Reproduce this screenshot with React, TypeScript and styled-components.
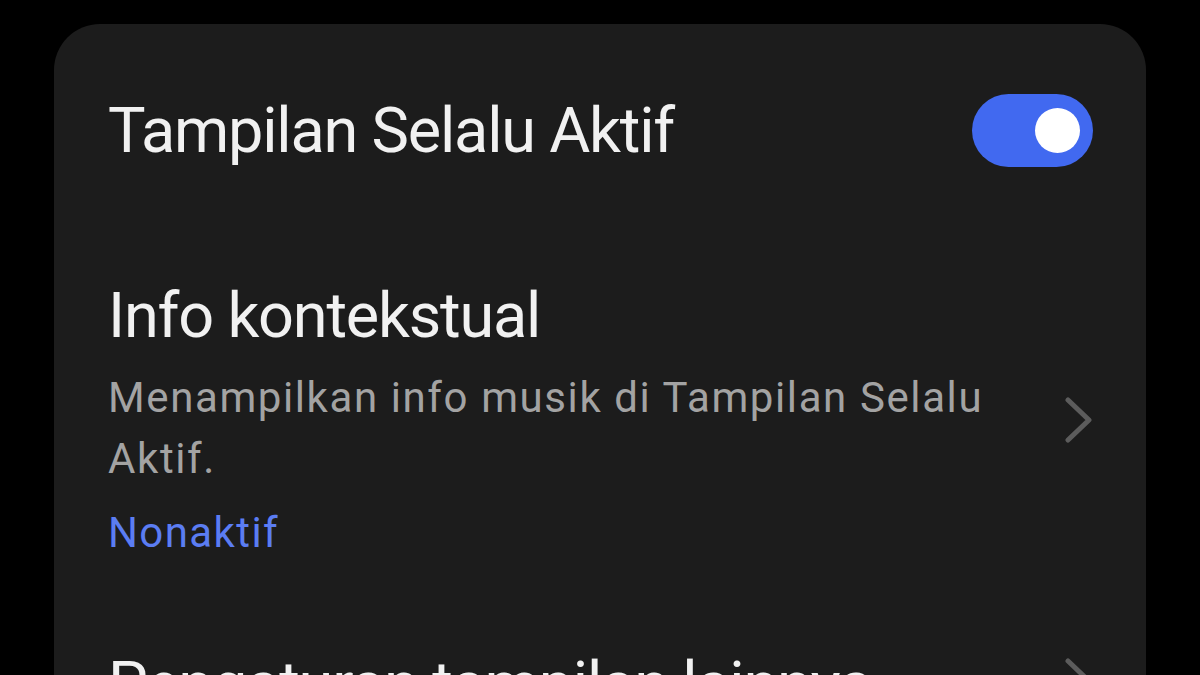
import React from "react";
import styled, { createGlobalStyle } from "styled-components";

const Global = createGlobalStyle`
  html, body {
    margin: 0;
    padding: 0;
    background: #000;
    overflow: hidden;
  }
  body {
    font-family: Roboto, "Noto Sans", "Liberation Sans", sans-serif;
    -webkit-font-smoothing: antialiased;
  }
`;

const Screen = styled.div`
  width: 1200px;
  height: 675px;
  background: #000;
  overflow: hidden;
  padding: 24px 54px 0 54px;
  box-sizing: border-box;
`;

const Card = styled.div`
  background: #1c1c1c;
  border-radius: 46px;
  padding: 68px 53px 60px 54px;
  display: flex;
  flex-direction: column;
  min-height: 800px;
  box-sizing: border-box;
`;

const Row = styled.div<{ $gap: number }>`
  display: flex;
  align-items: center;
  justify-content: space-between;
  margin-top: ${(p) => p.$gap}px;
`;

const TextCol = styled.div`
  display: flex;
  flex-direction: column;
  width: 900px;
`;

const Title = styled.div`
  color: #f1f1f1;
  font-size: 63px;
  line-height: 77px;
  letter-spacing: -1.2px;
  font-weight: 400;
  white-space: nowrap;
`;

const Subtitle = styled.div`
  color: #a3a3a3;
  font-size: 42px;
  line-height: 61px;
  letter-spacing: 1.6px;
  margin-top: 13px;
`;

const Status = styled.div`
  color: #5b7df3;
  font-size: 42px;
  line-height: 61px;
  letter-spacing: 1.4px;
  margin-top: 13px;
`;

const Switch = styled.div`
  width: 121px;
  height: 73px;
  border-radius: 37px;
  background: #4169f0;
  display: flex;
  align-items: center;
  justify-content: flex-end;
  padding-right: 13px;
  box-sizing: border-box;
`;

const Knob = styled.div`
  width: 45px;
  height: 45px;
  border-radius: 50%;
  background: #fff;
`;

const Chevron = styled.svg<{ $shift?: number }>`
  flex: none;
  width: 28px;
  height: 46px;
  margin-bottom: ${(p) => p.$shift ?? 0}px;
`;

const ChevronIcon = ({ shift }: { shift?: number }) => (
  <Chevron viewBox="0 0 28 46" $shift={shift}>
    <polyline
      points="3,3 24,23 3,43"
      fill="none"
      stroke="#5c5c5c"
      strokeWidth="5"
      strokeLinecap="round"
      strokeLinejoin="round"
    />
  </Chevron>
);

export default function App() {
  return (
    <>
      <Global />
      <Screen>
        <Card>
          <Row $gap={0}>
            <Title>Tampilan Selalu Aktif</Title>
            <Switch>
              <Knob />
            </Switch>
          </Row>
          <Row $gap={108}>
            <TextCol>
              <Title>Info kontekstual</Title>
              <Subtitle>Menampilkan info musik di Tampilan Selalu Aktif.</Subtitle>
              <Status>Nonaktif</Status>
            </TextCol>
            <ChevronIcon />
          </Row>
          <Row $gap={83}>
            <TextCol>
              <Title>Pengaturan tampilan lainnya</Title>
            </TextCol>
            <ChevronIcon shift={8} />
          </Row>
        </Card>
      </Screen>
    </>
  );
}
